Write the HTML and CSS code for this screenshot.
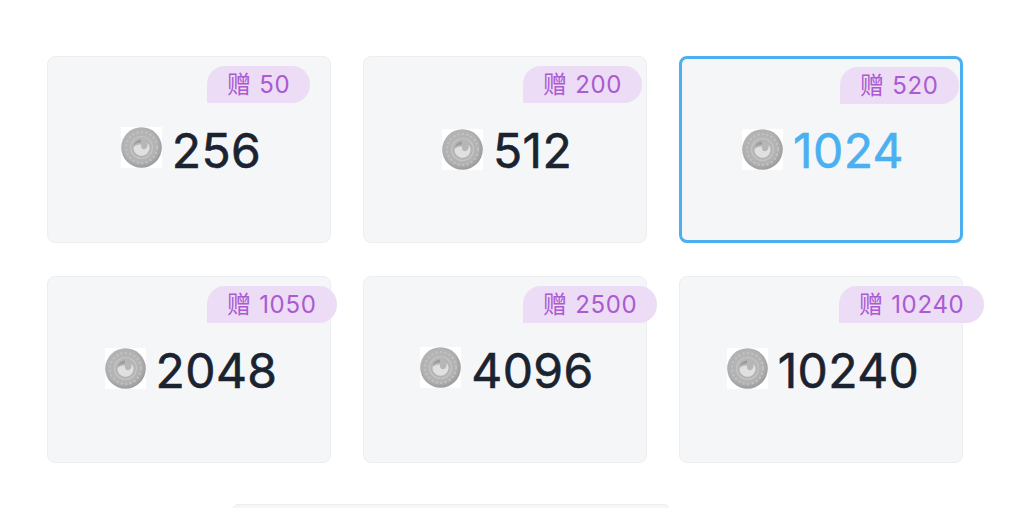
FILE: index.html
```html
<!DOCTYPE html>
<html lang="zh">
<head>
<meta charset="utf-8">
<title>充值</title>
<link rel="stylesheet" href="styles.css">
</head>
<body>
<svg class="defs" width="0" height="0" aria-hidden="true">
  <defs>
    <radialGradient id="coinFill" cx="46%" cy="44%" r="60%">
      <stop offset="0" stop-color="#b8b8b9"/>
      <stop offset="0.7" stop-color="#b2b2b3"/>
      <stop offset="1" stop-color="#959596"/>
    </radialGradient>
    <filter id="soft" x="-10%" y="-10%" width="120%" height="120%">
      <feGaussianBlur stdDeviation=".6"/>
    </filter>
    <symbol id="coin" viewBox="0 0 41 41">
      <rect width="41" height="41" fill="#fff"/>
      <circle cx="20.500" cy="20.500" r="20.300" fill="url(#coinFill)"/>
      <g filter="url(#soft)">
        <circle cx="20.500" cy="20.500" r="15.500" fill="none" stroke="#c2c2c3" stroke-width="2" stroke-dasharray="2 2.500"/>
        <circle cx="20.500" cy="20.500" r="11" fill="none" stroke="#c4c4c5" stroke-width="1.200"/>
        <path d="M12.500 21a8 8 0 0 0 15.500 2.500c1-3 .5-5.500-1.500-7.500.6 3.500-1 6-3.500 6.200-2.500.2-3.500-2-3-4.700-3 .1-7 .8-7.500 3.500Z" fill="#e0e0e0"/>
        <path d="M20 12.500c-3.500.4-6.500 2.500-7 6 1.500-1.800 4-2.700 7-2.900Z" fill="#9c9c9d"/>
      </g>
    </symbol>
  </defs>
</svg>
<main class="page">
  <section class="grid">
    <article class="card">
      <span class="badge">赠 50</span>
      <div class="amount"><svg class="coin high"><use href="#coin"/></svg><span>256</span></div>
    </article>
    <article class="card">
      <span class="badge">赠 200</span>
      <div class="amount"><svg class="coin low"><use href="#coin"/></svg><span>512</span></div>
    </article>
    <article class="card selected">
      <span class="badge">赠 520</span>
      <div class="amount"><svg class="coin low"><use href="#coin"/></svg><span>1024</span></div>
    </article>
    <article class="card">
      <span class="badge">赠 1050</span>
      <div class="amount"><svg class="coin"><use href="#coin"/></svg><span>2048</span></div>
    </article>
    <article class="card">
      <span class="badge">赠 2500</span>
      <div class="amount"><svg class="coin high"><use href="#coin"/></svg><span>4096</span></div>
    </article>
    <article class="card">
      <span class="badge">赠 10240</span>
      <div class="amount"><svg class="coin"><use href="#coin"/></svg><span>10240</span></div>
    </article>
  </section>
  <div class="next"></div>
</main>
</body>
</html>
```
FILE: styles.css
```css
html, body {
  margin: 0;
  height: 508px;
  overflow: hidden;
  background: #fff;
}
.defs { position: absolute; }
.page {
  padding: 56px 55px 0 47px;
  font-family: Inter, "Noto Sans CJK SC", sans-serif;
}
.grid {
  display: grid;
  grid-template-columns: repeat(3, 284px);
  grid-auto-rows: 187px;
  column-gap: 32px;
  row-gap: 33px;
}
.card {
  position: relative;
  box-sizing: border-box;
  display: flex;
  align-items: center;
  justify-content: center;
  background: #f5f6f8;
  border: 1.5px solid #eeeef0;
  border-radius: 8px;
}
.card.selected {
  border: 3px solid #4bb0f0;
}
.amount {
  display: flex;
  align-items: center;
  gap: 10px;
  padding: 3px 0 0 4px;
  font-size: 48px;
  font-weight: 400;
  -webkit-text-stroke: .6px currentColor;
  letter-spacing: .4px;
  line-height: 56px;
  color: #1b2330;
}
.selected .amount { color: #4bb0f0; }
.coin {
  width: 41px;
  height: 41px;
  flex: none;
  margin-bottom: 6px;
}
.coin.high { margin-bottom: 8px; }
.coin.low { margin-bottom: 3px; }
.badge {
  position: absolute;
  left: 159px;
  top: 9px;
  padding: 0 20px;
  height: 37px;
  line-height: 37px;
  font-size: 24px;
  letter-spacing: .7px;
  color: #ab5ad2;
  background: #ecdcf5;
  border-radius: 18px 18px 18px 0;
  white-space: nowrap;
}
.selected .badge { left: 158px; top: 8px; }
.next {
  box-sizing: border-box;
  width: 436px;
  height: 5px;
  margin: 41px 0 0 186px;
  background: #f6f6f8;
  border: 1.5px solid #eeeef0;
  border-bottom: 0;
  border-radius: 6px 6px 0 0;
}
```
